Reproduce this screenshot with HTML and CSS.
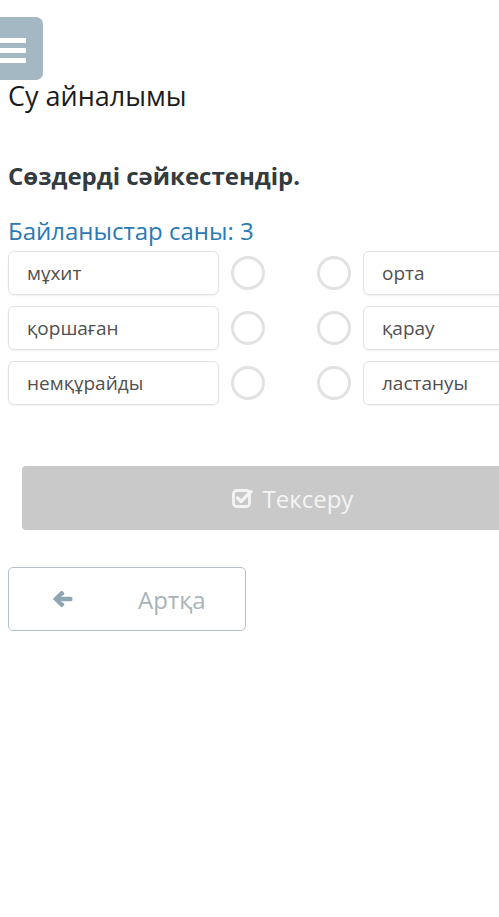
FILE: index.html
```html
<!DOCTYPE html>
<html lang="kk">
<head>
    <meta charset="UTF-8">
    <meta name="viewport" content="width=device-width, initial-scale=1.0">
    <title>Су айналымы</title>
    <link rel="stylesheet" href="styles.css">
</head>
<body>
    <div class="page">
        <button class="menu-btn" aria-label="Menu">
            <span></span><span></span><span></span>
        </button>
        <h1 class="title">Су айналымы</h1>
        <h2 class="task">Сөздерді сәйкестендір.</h2>
        <div class="counter">Байланыстар саны: 3</div>

        <div class="match">
            <div class="row">
                <div class="word">мұхит</div>
                <div class="dot dot-left"></div>
                <div class="dot dot-right"></div>
                <div class="word">орта</div>
            </div>
            <div class="row">
                <div class="word">қоршаған</div>
                <div class="dot dot-left"></div>
                <div class="dot dot-right"></div>
                <div class="word">қарау</div>
            </div>
            <div class="row">
                <div class="word">немқұрайды</div>
                <div class="dot dot-left"></div>
                <div class="dot dot-right"></div>
                <div class="word">ластануы</div>
            </div>
        </div>

        <button class="check-btn">
            <svg class="check-icon" viewBox="0 0 22 20" width="22" height="20">
                <rect x="1.5" y="2.5" width="16" height="16" rx="3" fill="none" stroke="currentColor" stroke-width="2.8"/>
                <path d="M5.5 10 L9 13.5 L19 3.5" fill="none" stroke="currentColor" stroke-width="3.2" stroke-linecap="round" stroke-linejoin="round"/>
            </svg>
            Тексеру
        </button>

        <button class="back-btn">
            <svg class="back-icon" viewBox="0 0 20 17" width="21" height="18">
                <path d="M0.8 8.5 L8 1.3 Q9.2 0.2 10.4 1.3 L11.3 2.2 Q12.4 3.4 11.3 4.5 L8.3 6.4 L18 6.4 Q19.5 6.4 19.5 7.9 L19.5 9.1 Q19.5 10.6 18 10.6 L8.3 10.6 L11.3 12.5 Q12.4 13.6 11.3 14.8 L10.4 15.7 Q9.2 16.8 8 15.7 Z" fill="currentColor"/>
            </svg>
            <span>Артқа</span>
        </button>
    </div>
</body>
</html>
```

FILE: styles.css
```css
html, body {
    margin: 0;
    padding: 0;
    overflow: hidden;
    background-color: #fff;
}
body {
    font-family: "Open Sans", "Noto Sans", sans-serif;
    color: #222;
}
.page {
    width: 600px;
    padding: 17px 0 0 8px;
}
.menu-btn {
    display: flex;
    flex-direction: column;
    justify-content: center;
    gap: 5px;
    margin-left: -22px;
    width: 57px;
    height: 63px;
    padding: 3px 0 0 0;
    border: none;
    border-radius: 7px;
    background-color: #a4b8c4;
}
.menu-btn span {
    display: block;
    width: 40px;
    height: 5px;
    background-color: #fff;
}
.title {
    margin: -1px 0 0;
    font-size: 27px;
    font-weight: 400;
    line-height: 34px;
    color: #1c1c1c;
}
.task {
    margin: 48px 0 0;
    font-size: 24px;
    font-weight: 700;
    line-height: 30px;
    color: #333b40;
}
.counter {
    margin-top: 25px;
    font-size: 24px;
    line-height: 30px;
    color: #2a7ab3;
}
.match {
    display: flex;
    flex-direction: column;
    gap: 11px;
    margin-top: 5px;
}
.row {
    display: flex;
    align-items: center;
}
.word {
    box-sizing: border-box;
    width: 211px;
    height: 44px;
    padding: 0 18px;
    border: 1px solid #e2e2e2;
    border-radius: 6px;
    box-shadow: 0 1px 2px rgba(0, 0, 0, 0.06);
    font-size: 19px;
    line-height: 42px;
    color: #505050;
}
.dot {
    box-sizing: border-box;
    width: 34px;
    height: 34px;
    border: 3px solid #e2e2e2;
    border-radius: 50%;
}
.dot-left {
    margin: 0 52px 0 12px;
}
.dot-right {
    margin-right: 12px;
}
.check-btn {
    display: flex;
    align-items: center;
    justify-content: center;
    gap: 9px;
    box-sizing: border-box;
    width: 541px;
    height: 64px;
    margin: 61px 0 0 14px;
    border: none;
    border-radius: 4px;
    background-color: #c9c9c9;
    color: #f4f4f4;
    font-family: inherit;
    font-size: 24px;
}
.back-btn {
    display: flex;
    align-items: center;
    box-sizing: border-box;
    width: 238px;
    height: 64px;
    margin-top: 37px;
    padding: 0 0 0 43px;
    border: 1px solid #b3c2c8;
    border-radius: 5px;
    background-color: #fff;
    color: #a9b4b9;
    font-family: inherit;
    font-size: 24px;
}
.back-icon {
    color: #8ea8b3;
    margin-right: 65px;
}
```
